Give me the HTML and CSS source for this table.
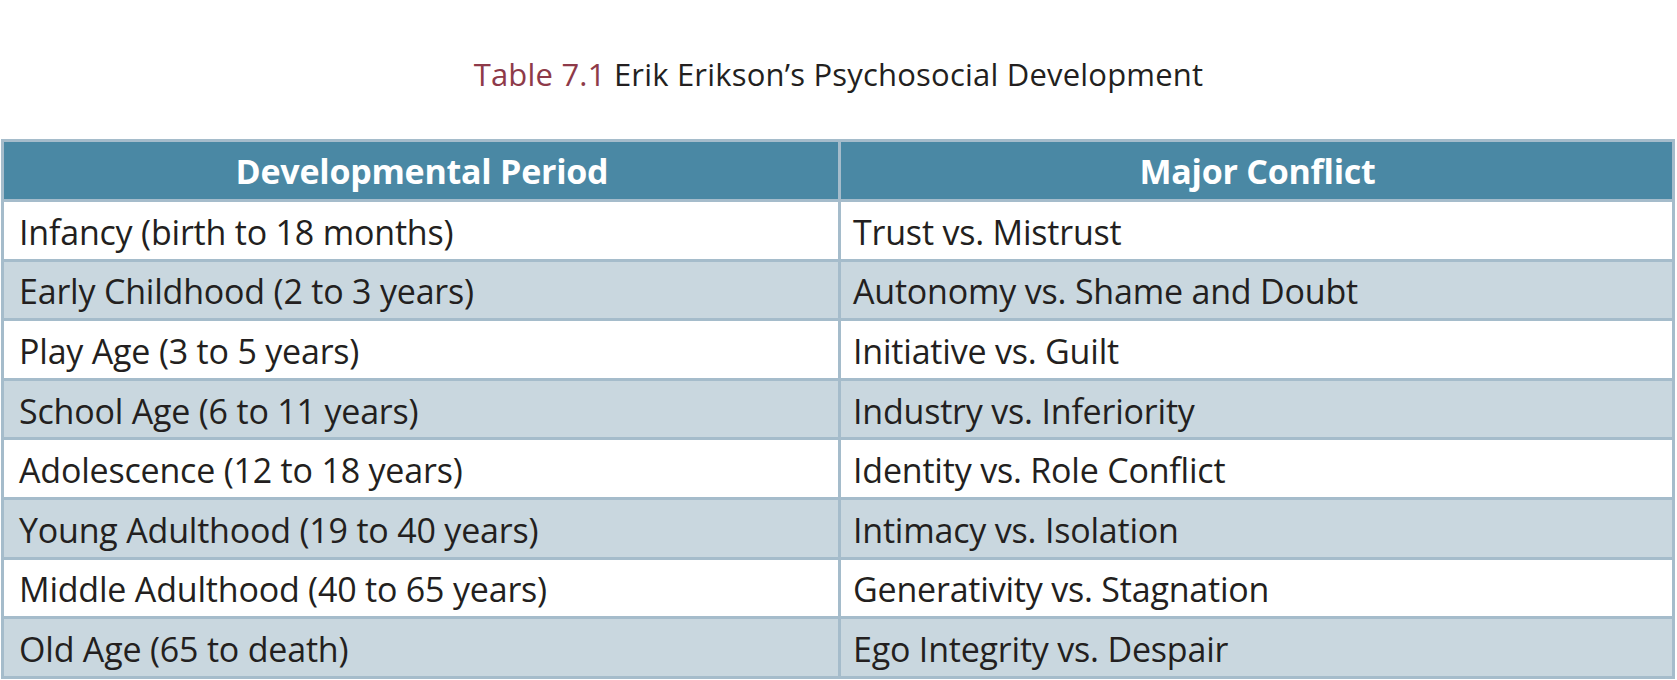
FILE: index.html
```html
<!DOCTYPE html>
<html>
<head>
<meta charset="utf-8">
<link rel="stylesheet" href="styles.css">
</head>
<body>
<div class="page">
  <h1 class="caption"><span class="label">Table 7.1</span> Erik Erikson’s Psychosocial Development</h1>
  <table class="grid">
    <thead>
      <tr><th class="c1">Developmental Period</th><th class="c2">Major Conflict</th></tr>
    </thead>
    <tbody>
      <tr><td>Infancy (birth to 18 months)</td><td>Trust vs. Mistrust</td></tr>
      <tr class="alt"><td>Early Childhood (2 to 3 years)</td><td>Autonomy vs. Shame and Doubt</td></tr>
      <tr><td>Play Age (3 to 5 years)</td><td>Initiative vs. Guilt</td></tr>
      <tr class="alt"><td>School Age (6 to 11 years)</td><td>Industry vs. Inferiority</td></tr>
      <tr><td>Adolescence (12 to 18 years)</td><td>Identity vs. Role Conflict</td></tr>
      <tr class="alt"><td>Young Adulthood (19 to 40 years)</td><td>Intimacy vs. Isolation</td></tr>
      <tr><td>Middle Adulthood (40 to 65 years)</td><td>Generativity vs. Stagnation</td></tr>
      <tr class="alt"><td>Old Age (65 to death)</td><td>Ego Integrity vs. Despair</td></tr>
    </tbody>
  </table>
</div>
</body>
</html>
```
FILE: styles.css
```css
html, body {
  margin: 0;
  padding: 0;
  background: #ffffff;
}
.page {
  width: 1677px;
  height: 680px;
  overflow: hidden;
  font-family: "Open Sans", "Noto Sans", sans-serif;
  color: #231f20;
}
.caption {
  margin: 0;
  height: 139px;
  box-sizing: border-box;
  padding-top: 54px;
  text-align: center;
  font-weight: 400;
  font-size: 31px;
  line-height: 40px;
  color: #231f20;
  letter-spacing: 0.2px;
}
.caption .label {
  color: #8e3a49;
}
.grid {
  margin-left: 1px;
  width: 1674px;
  border-collapse: collapse;
  border: 3px solid #a5bccb;
  table-layout: fixed;
}
.grid th, .grid td {
  border: 3px solid #a5bccb;
  padding: 0 13px 0 15px;
  box-sizing: border-box;
  height: 59.6px;
  vertical-align: middle;
  line-height: 40px;
}
.grid th.c1 { width: 837px; }
.grid th {
  background: #4a88a4;
  color: #ffffff;
  font-weight: 700;
  font-size: 34px;
  letter-spacing: -0.25px;
  text-align: center;
  height: 60px;
}
.grid td {
  font-size: 34px;
  letter-spacing: -0.2px;
  font-weight: 400;
  text-align: left;
  background: #ffffff;
  padding-top: 3px;
}
.grid td + td {
  padding-left: 12px;
}
.grid tr.alt td {
  background: #c9d7df;
}
```
